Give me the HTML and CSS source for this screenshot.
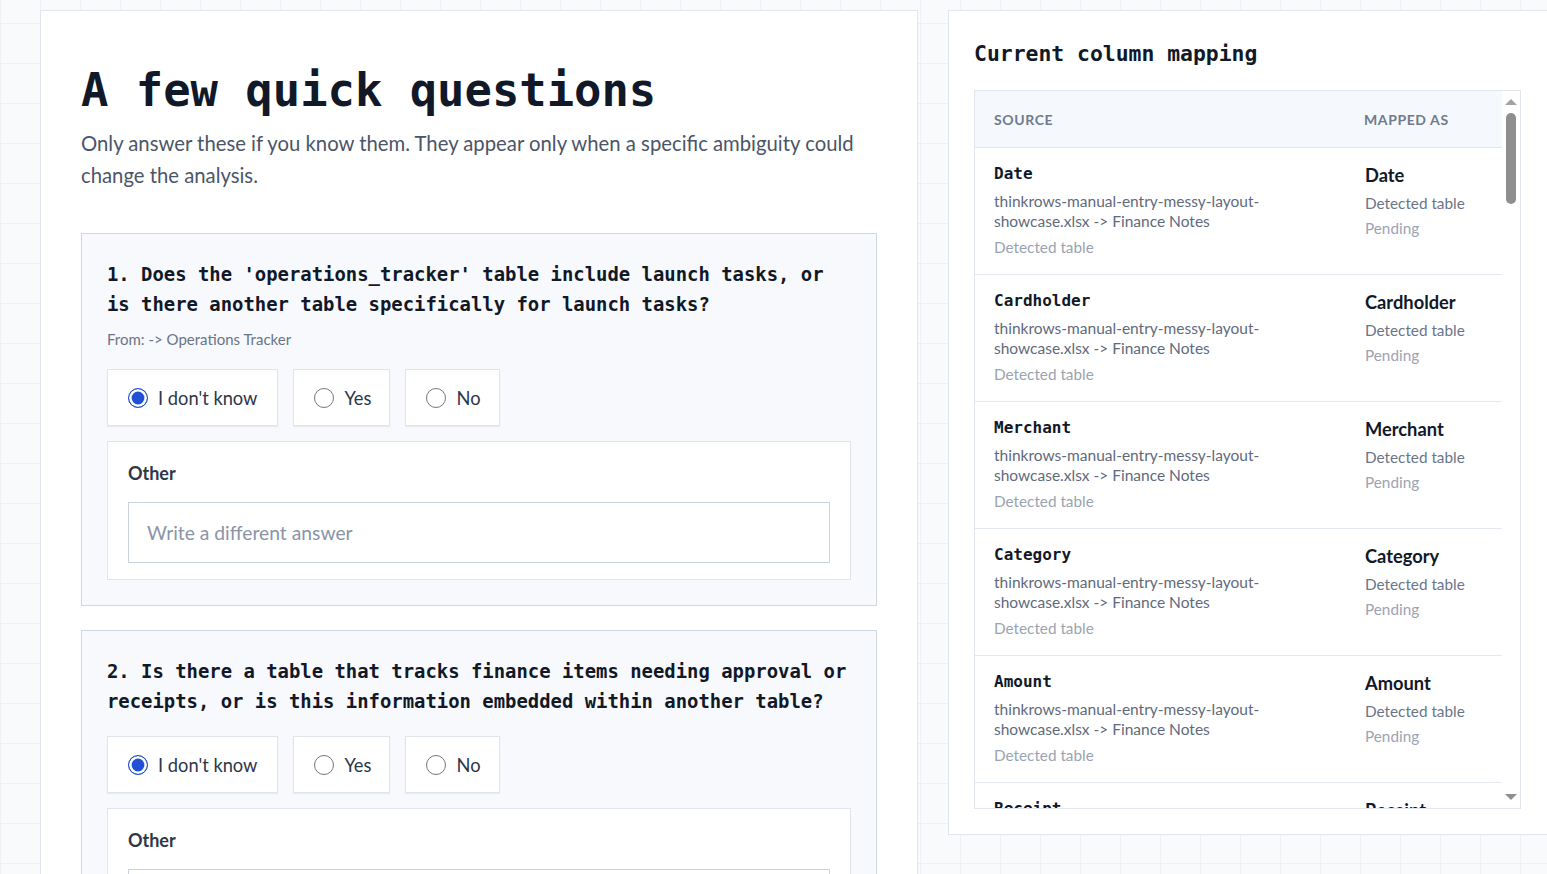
FILE: index.html
```html
<!DOCTYPE html>
<html lang="en">
<head>
<meta charset="utf-8">
<title>A few quick questions</title>
<link rel="stylesheet" href="styles.css">
</head>
<body>
<div class="page">
  <main class="panel questions">
    <h1 class="title">A few quick questions</h1>
    <p class="lead">Only answer these if you know them. They appear only when a specific ambiguity could change the analysis.</p>

    <section class="qcard">
      <h3 class="qtext">1. Does the 'operations_tracker' table include launch tasks, or is there another table specifically for launch tasks?</h3>
      <div class="from">From: -&gt; Operations Tracker</div>
      <div class="options">
        <label class="opt"><span class="radio checked"></span>I don't know</label>
        <label class="opt"><span class="radio"></span>Yes</label>
        <label class="opt"><span class="radio"></span>No</label>
      </div>
      <div class="other">
        <div class="other-label">Other</div>
        <input class="answer" type="text" placeholder="Write a different answer">
      </div>
    </section>

    <section class="qcard">
      <h3 class="qtext">2. Is there a table that tracks finance items needing approval or receipts, or is this information embedded within another table?</h3>
      <div class="options">
        <label class="opt"><span class="radio checked"></span>I don't know</label>
        <label class="opt"><span class="radio"></span>Yes</label>
        <label class="opt"><span class="radio"></span>No</label>
      </div>
      <div class="other">
        <div class="other-label">Other</div>
        <input class="answer" type="text" placeholder="Write a different answer">
      </div>
    </section>
  </main>

  <aside class="panel mapping">
    <h2 class="map-title">Current column mapping</h2>
    <div class="map">
      <div class="map-scroll">
        <div class="map-head">
          <div class="cell">Source</div>
          <div class="cell">Mapped as</div>
        </div>

        <div class="map-row"><div class="cell"><div class="src">Date</div><div class="path">thinkrows-manual-entry-messy-layout-showcase.xlsx -&gt; Finance Notes</div><div class="det">Detected table</div></div><div class="cell"><div class="dst">Date</div><div class="kind">Detected table</div><div class="state">Pending</div></div></div>
        <div class="map-row"><div class="cell"><div class="src">Cardholder</div><div class="path">thinkrows-manual-entry-messy-layout-showcase.xlsx -&gt; Finance Notes</div><div class="det">Detected table</div></div><div class="cell"><div class="dst">Cardholder</div><div class="kind">Detected table</div><div class="state">Pending</div></div></div>
        <div class="map-row"><div class="cell"><div class="src">Merchant</div><div class="path">thinkrows-manual-entry-messy-layout-showcase.xlsx -&gt; Finance Notes</div><div class="det">Detected table</div></div><div class="cell"><div class="dst">Merchant</div><div class="kind">Detected table</div><div class="state">Pending</div></div></div>
        <div class="map-row"><div class="cell"><div class="src">Category</div><div class="path">thinkrows-manual-entry-messy-layout-showcase.xlsx -&gt; Finance Notes</div><div class="det">Detected table</div></div><div class="cell"><div class="dst">Category</div><div class="kind">Detected table</div><div class="state">Pending</div></div></div>
        <div class="map-row"><div class="cell"><div class="src">Amount</div><div class="path">thinkrows-manual-entry-messy-layout-showcase.xlsx -&gt; Finance Notes</div><div class="det">Detected table</div></div><div class="cell"><div class="dst">Amount</div><div class="kind">Detected table</div><div class="state">Pending</div></div></div>
        <div class="map-row"><div class="cell"><div class="src">Receipt</div><div class="path">thinkrows-manual-entry-messy-layout-showcase.xlsx -&gt; Finance Notes</div><div class="det">Detected table</div></div><div class="cell"><div class="dst">Receipt</div><div class="kind">Detected table</div><div class="state">Pending</div></div></div>
        <div class="map-row"><div class="cell"><div class="src">Approved By</div><div class="path">thinkrows-manual-entry-messy-layout-showcase.xlsx -&gt; Finance Notes</div><div class="det">Detected table</div></div><div class="cell"><div class="dst">Approved By</div><div class="kind">Detected table</div><div class="state">Pending</div></div></div>
        <div class="map-row"><div class="cell"><div class="src">Status</div><div class="path">thinkrows-manual-entry-messy-layout-showcase.xlsx -&gt; Finance Notes</div><div class="det">Detected table</div></div><div class="cell"><div class="dst">Status</div><div class="kind">Detected table</div><div class="state">Pending</div></div></div>
        <div class="map-row"><div class="cell"><div class="src">Notes</div><div class="path">thinkrows-manual-entry-messy-layout-showcase.xlsx -&gt; Finance Notes</div><div class="det">Detected table</div></div><div class="cell"><div class="dst">Notes</div><div class="kind">Detected table</div><div class="state">Pending</div></div></div>
        <div class="map-row"><div class="cell"><div class="src">Task</div><div class="path">thinkrows-manual-entry-messy-layout-showcase.xlsx -&gt; Operations Tracker</div><div class="det">Detected table</div></div><div class="cell"><div class="dst">Task</div><div class="kind">Detected table</div><div class="state">Pending</div></div></div>
        <div class="map-row"><div class="cell"><div class="src">Owner</div><div class="path">thinkrows-manual-entry-messy-layout-showcase.xlsx -&gt; Operations Tracker</div><div class="det">Detected table</div></div><div class="cell"><div class="dst">Owner</div><div class="kind">Detected table</div><div class="state">Pending</div></div></div>
        <div class="map-row"><div class="cell"><div class="src">Team</div><div class="path">thinkrows-manual-entry-messy-layout-showcase.xlsx -&gt; Operations Tracker</div><div class="det">Detected table</div></div><div class="cell"><div class="dst">Team</div><div class="kind">Detected table</div><div class="state">Pending</div></div></div>
        <div class="map-row"><div class="cell"><div class="src">Start Date</div><div class="path">thinkrows-manual-entry-messy-layout-showcase.xlsx -&gt; Operations Tracker</div><div class="det">Detected table</div></div><div class="cell"><div class="dst">Start Date</div><div class="kind">Detected table</div><div class="state">Pending</div></div></div>
        <div class="map-row"><div class="cell"><div class="src">Due Date</div><div class="path">thinkrows-manual-entry-messy-layout-showcase.xlsx -&gt; Operations Tracker</div><div class="det">Detected table</div></div><div class="cell"><div class="dst">Due Date</div><div class="kind">Detected table</div><div class="state">Pending</div></div></div>
        <div class="map-row"><div class="cell"><div class="src">Status</div><div class="path">thinkrows-manual-entry-messy-layout-showcase.xlsx -&gt; Operations Tracker</div><div class="det">Detected table</div></div><div class="cell"><div class="dst">Status</div><div class="kind">Detected table</div><div class="state">Pending</div></div></div>
        <div class="map-row"><div class="cell"><div class="src">Priority</div><div class="path">thinkrows-manual-entry-messy-layout-showcase.xlsx -&gt; Operations Tracker</div><div class="det">Detected table</div></div><div class="cell"><div class="dst">Priority</div><div class="kind">Detected table</div><div class="state">Pending</div></div></div>
        <div class="map-row"><div class="cell"><div class="src">Launch</div><div class="path">thinkrows-manual-entry-messy-layout-showcase.xlsx -&gt; Operations Tracker</div><div class="det">Detected table</div></div><div class="cell"><div class="dst">Launch</div><div class="kind">Detected table</div><div class="state">Pending</div></div></div>
        <div class="map-row"><div class="cell"><div class="src">Blocked By</div><div class="path">thinkrows-manual-entry-messy-layout-showcase.xlsx -&gt; Operations Tracker</div><div class="det">Detected table</div></div><div class="cell"><div class="dst">Blocked By</div><div class="kind">Detected table</div><div class="state">Pending</div></div></div>
        <div class="map-row"><div class="cell"><div class="src">Notes</div><div class="path">thinkrows-manual-entry-messy-layout-showcase.xlsx -&gt; Operations Tracker</div><div class="det">Detected table</div></div><div class="cell"><div class="dst">Notes</div><div class="kind">Detected table</div><div class="state">Pending</div></div></div>
        <div class="map-row"><div class="cell"><div class="src">Last Updated</div><div class="path">thinkrows-manual-entry-messy-layout-showcase.xlsx -&gt; Operations Tracker</div><div class="det">Detected table</div></div><div class="cell"><div class="dst">Last Updated</div><div class="kind">Detected table</div><div class="state">Pending</div></div></div>
        <div class="map-row"><div class="cell"><div class="src">SKU</div><div class="path">thinkrows-manual-entry-messy-layout-showcase.xlsx -&gt; Inventory Log</div><div class="det">Detected table</div></div><div class="cell"><div class="dst">SKU</div><div class="kind">Detected table</div><div class="state">Pending</div></div></div>
        <div class="map-row"><div class="cell"><div class="src">Item</div><div class="path">thinkrows-manual-entry-messy-layout-showcase.xlsx -&gt; Inventory Log</div><div class="det">Detected table</div></div><div class="cell"><div class="dst">Item</div><div class="kind">Detected table</div><div class="state">Pending</div></div></div>
        <div class="map-row"><div class="cell"><div class="src">Location</div><div class="path">thinkrows-manual-entry-messy-layout-showcase.xlsx -&gt; Inventory Log</div><div class="det">Detected table</div></div><div class="cell"><div class="dst">Location</div><div class="kind">Detected table</div><div class="state">Pending</div></div></div>
        <div class="map-row"><div class="cell"><div class="src">Quantity</div><div class="path">thinkrows-manual-entry-messy-layout-showcase.xlsx -&gt; Inventory Log</div><div class="det">Detected table</div></div><div class="cell"><div class="dst">Quantity</div><div class="kind">Detected table</div><div class="state">Pending</div></div></div>
        <div class="map-row"><div class="cell"><div class="src">Reorder Level</div><div class="path">thinkrows-manual-entry-messy-layout-showcase.xlsx -&gt; Inventory Log</div><div class="det">Detected table</div></div><div class="cell"><div class="dst">Reorder Level</div><div class="kind">Detected table</div><div class="state">Pending</div></div></div>
        <div class="map-row"><div class="cell"><div class="src">Supplier</div><div class="path">thinkrows-manual-entry-messy-layout-showcase.xlsx -&gt; Inventory Log</div><div class="det">Detected table</div></div><div class="cell"><div class="dst">Supplier</div><div class="kind">Detected table</div><div class="state">Pending</div></div></div>
        <div class="map-row"><div class="cell"><div class="src">Unit Cost</div><div class="path">thinkrows-manual-entry-messy-layout-showcase.xlsx -&gt; Inventory Log</div><div class="det">Detected table</div></div><div class="cell"><div class="dst">Unit Cost</div><div class="kind">Detected table</div><div class="state">Pending</div></div></div>
        <div class="map-row"><div class="cell"><div class="src">Last Count</div><div class="path">thinkrows-manual-entry-messy-layout-showcase.xlsx -&gt; Inventory Log</div><div class="det">Detected table</div></div><div class="cell"><div class="dst">Last Count</div><div class="kind">Detected table</div><div class="state">Pending</div></div></div>
        <div class="map-row"><div class="cell"><div class="src">Name</div><div class="path">thinkrows-manual-entry-messy-layout-showcase.xlsx -&gt; Customer Contacts</div><div class="det">Detected table</div></div><div class="cell"><div class="dst">Name</div><div class="kind">Detected table</div><div class="state">Pending</div></div></div>
        <div class="map-row"><div class="cell"><div class="src">Company</div><div class="path">thinkrows-manual-entry-messy-layout-showcase.xlsx -&gt; Customer Contacts</div><div class="det">Detected table</div></div><div class="cell"><div class="dst">Company</div><div class="kind">Detected table</div><div class="state">Pending</div></div></div>
        <div class="map-row"><div class="cell"><div class="src">Email</div><div class="path">thinkrows-manual-entry-messy-layout-showcase.xlsx -&gt; Customer Contacts</div><div class="det">Detected table</div></div><div class="cell"><div class="dst">Email</div><div class="kind">Detected table</div><div class="state">Pending</div></div></div>
        <div class="map-row"><div class="cell"><div class="src">Phone</div><div class="path">thinkrows-manual-entry-messy-layout-showcase.xlsx -&gt; Customer Contacts</div><div class="det">Detected table</div></div><div class="cell"><div class="dst">Phone</div><div class="kind">Detected table</div><div class="state">Pending</div></div></div>
        <div class="map-row"><div class="cell"><div class="src">Region</div><div class="path">thinkrows-manual-entry-messy-layout-showcase.xlsx -&gt; Customer Contacts</div><div class="det">Detected table</div></div><div class="cell"><div class="dst">Region</div><div class="kind">Detected table</div><div class="state">Pending</div></div></div>
        <div class="map-row"><div class="cell"><div class="src">Account Manager</div><div class="path">thinkrows-manual-entry-messy-layout-showcase.xlsx -&gt; Customer Contacts</div><div class="det">Detected table</div></div><div class="cell"><div class="dst">Account Manager</div><div class="kind">Detected table</div><div class="state">Pending</div></div></div>
        <div class="map-row"><div class="cell"><div class="src">Last Contact</div><div class="path">thinkrows-manual-entry-messy-layout-showcase.xlsx -&gt; Customer Contacts</div><div class="det">Detected table</div></div><div class="cell"><div class="dst">Last Contact</div><div class="kind">Detected table</div><div class="state">Pending</div></div></div>
        <div class="map-row"><div class="cell"><div class="src">Stage</div><div class="path">thinkrows-manual-entry-messy-layout-showcase.xlsx -&gt; Customer Contacts</div><div class="det">Detected table</div></div><div class="cell"><div class="dst">Stage</div><div class="kind">Detected table</div><div class="state">Pending</div></div></div>
        <div class="map-row"><div class="cell"><div class="src">Vendor</div><div class="path">thinkrows-manual-entry-messy-layout-showcase.xlsx -&gt; Vendors</div><div class="det">Detected table</div></div><div class="cell"><div class="dst">Vendor</div><div class="kind">Detected table</div><div class="state">Pending</div></div></div>
        <div class="map-row"><div class="cell"><div class="src">Contact</div><div class="path">thinkrows-manual-entry-messy-layout-showcase.xlsx -&gt; Vendors</div><div class="det">Detected table</div></div><div class="cell"><div class="dst">Contact</div><div class="kind">Detected table</div><div class="state">Pending</div></div></div>
        <div class="map-row"><div class="cell"><div class="src">Terms</div><div class="path">thinkrows-manual-entry-messy-layout-showcase.xlsx -&gt; Vendors</div><div class="det">Detected table</div></div><div class="cell"><div class="dst">Terms</div><div class="kind">Detected table</div><div class="state">Pending</div></div></div>
        <div class="map-row"><div class="cell"><div class="src">Rating</div><div class="path">thinkrows-manual-entry-messy-layout-showcase.xlsx -&gt; Vendors</div><div class="det">Detected table</div></div><div class="cell"><div class="dst">Rating</div><div class="kind">Detected table</div><div class="state">Pending</div></div></div>
        <div class="map-row"><div class="cell"><div class="src">Active</div><div class="path">thinkrows-manual-entry-messy-layout-showcase.xlsx -&gt; Vendors</div><div class="det">Detected table</div></div><div class="cell"><div class="dst">Active</div><div class="kind">Detected table</div><div class="state">Pending</div></div></div>
      </div>
      <div class="scrollbar" aria-hidden="true">
        <span class="sb-arrow up"></span>
        <span class="sb-track"><span class="sb-thumb"></span></span>
        <span class="sb-arrow down"></span>
      </div>
    </div>
  </aside>
</div>
</body>
</html>
```

FILE: styles.css
```css
* { box-sizing: border-box; }

html, body {
  margin: 0;
  height: 100%;
  overflow: hidden;
}

body {
  background-color: #f8fafc;
  background-image:
    linear-gradient(to right, #edf1f6 1px, transparent 1px),
    linear-gradient(to bottom, #edf1f6 1px, transparent 1px);
  background-size: 40px 40px;
  background-position: 0 23px;
  font-family: "Lato", "Noto Sans", sans-serif;
  color: #111827;
}

.page {
  display: grid;
  grid-template-columns: 878px 640px;
  column-gap: 30px;
  align-items: start;
  padding: 10px 0 0 40px;
}

.panel {
  background: #ffffff;
  border: 1px solid #e1e6ee;
}

/* ---------- Left: questions ---------- */
.questions {
  padding: 40px 40px 40px 40px;
}

.title {
  margin: 12px 0 0;
  font-family: "DejaVu Sans Mono", "Liberation Mono", monospace;
  font-size: 45.5px;
  line-height: 55px;
  font-weight: 700;
  color: #111827;
}

.lead {
  margin: 9px 0 0;
  font-size: 20.3px;
  line-height: 32px;
  color: #4b5567;
}

.qcard {
  margin-top: 42px;
  background: #f7f9fc;
  border: 1px solid #cfd7e3;
  padding: 25px 25px 25px 25px;
}

.qcard + .qcard {
  margin-top: 24px;
}

.qtext {
  margin: 0;
  font-family: "DejaVu Sans Mono", "Liberation Mono", monospace;
  font-size: 18.9px;
  line-height: 30px;
  font-weight: 700;
  color: #111827;
}

.from {
  margin-top: 10px;
  font-size: 15px;
  line-height: 20px;
  color: #6b7588;
}

.options {
  display: flex;
  gap: 15px;
  margin-top: 20px;
}

.opt {
  display: flex;
  align-items: center;
  gap: 10px;
  height: 57px;
  padding: 0 20px;
  background: #ffffff;
  border: 1px solid #e0e5ec;
  box-shadow: 0 1px 1px rgba(15, 23, 42, 0.06);
  font-size: 18.3px;
  color: #2d3748;
}

.opt:nth-child(n+2) {
  padding-right: 18px;
}

.radio {
  flex: none;
  width: 20px;
  height: 20px;
  border-radius: 50%;
  border: 1.3px solid #767676;
  background: #ffffff;
}

.radio.checked {
  border: 1.8px solid #2150d6;
  background: #2150d6;
  box-shadow: inset 0 0 0 2.6px #ffffff;
}

.other {
  margin-top: 15px;
  background: #ffffff;
  border: 1px solid #e0e5ec;
  padding: 19px 20px 16px;
}

.other-label {
  font-size: 18px;
  line-height: 24px;
  font-weight: 700;
  color: #2d3748;
}

.answer {
  display: block;
  width: 100%;
  height: 61px;
  margin-top: 17px;
  padding: 0 18px;
  border: 1px solid #c9d2de;
  background: #ffffff;
  font-family: "Lato", "Noto Sans", sans-serif;
  font-size: 19.3px;
  color: #2d3748;
  outline: none;
}

.answer::placeholder {
  color: #8a94a6;
}

/* ---------- Right: mapping ---------- */
.mapping {
  padding: 30px 25px 25px 25px;
}

.map-title {
  margin: 0 0 23px;
  font-family: "DejaVu Sans Mono", "Liberation Mono", monospace;
  font-size: 21.4px;
  line-height: 26px;
  font-weight: 700;
  color: #111827;
}

.map {
  position: relative;
  width: 547px;
  height: 719px;
  border: 1px solid #e1e6ee;
  overflow: hidden;
}

.map-scroll {
  height: 100%;
  margin-right: 18px;
  overflow: hidden;
}

.map-head,
.map-row {
  display: grid;
  grid-template-columns: 370px 1fr;
  border-bottom: 1px solid #e3e8ef;
}

.map-head {
  height: 57px;
  align-items: center;
  background: #f5f8fc;
}

.map-head .cell {
  padding: 0 19px;
  font-size: 14px;
  font-weight: 700;
  letter-spacing: 0.6px;
  text-transform: uppercase;
  color: #6f7b8f;
}

.map-row {
  height: 127px;
  align-items: start;
}

.map-row .cell {
  padding: 16px 19px 0;
}

.map-row .cell + .cell {
  padding-left: 20px;
}

.src {
  font-family: "DejaVu Sans Mono", "Liberation Mono", monospace;
  font-size: 16px;
  line-height: 20px;
  font-weight: 700;
  color: #111827;
}

.path {
  margin-top: 7px;
  font-size: 15.5px;
  line-height: 20px;
  color: #5f6a7d;
  padding-right: 20px;
}

.det {
  margin-top: 6px;
  font-size: 15.3px;
  line-height: 20px;
  color: #9aa3b2;
}

.dst {
  font-size: 18.3px;
  line-height: 22px;
  font-weight: 700;
  color: #111827;
}

.kind {
  margin-top: 7px;
  font-size: 15.3px;
  line-height: 20px;
  color: #6b7588;
}

.state {
  margin-top: 5px;
  font-size: 15.3px;
  line-height: 20px;
  color: #9ca3b1;
}

/* drawn scrollbar overlaying the right edge of the list */
.scrollbar {
  position: absolute;
  top: 0;
  right: 0;
  bottom: 0;
  width: 18px;
  display: flex;
  flex-direction: column;
  align-items: center;
  padding: 8px 0 8px;
  background: #ffffff;
}

.sb-arrow {
  flex: none;
  width: 0;
  height: 0;
  border-left: 6.5px solid transparent;
  border-right: 6.5px solid transparent;
}

.sb-arrow.up {
  border-bottom: 6px solid #a3a3a3;
}

.sb-arrow.down {
  border-top: 6px solid #8f8f8f;
}

.sb-track {
  flex: 1;
  width: 10px;
  padding: 8px 0;
}

.sb-thumb {
  display: block;
  width: 10px;
  height: 91px;
  border-radius: 5px;
  background: #8e8e8e;
}
```
